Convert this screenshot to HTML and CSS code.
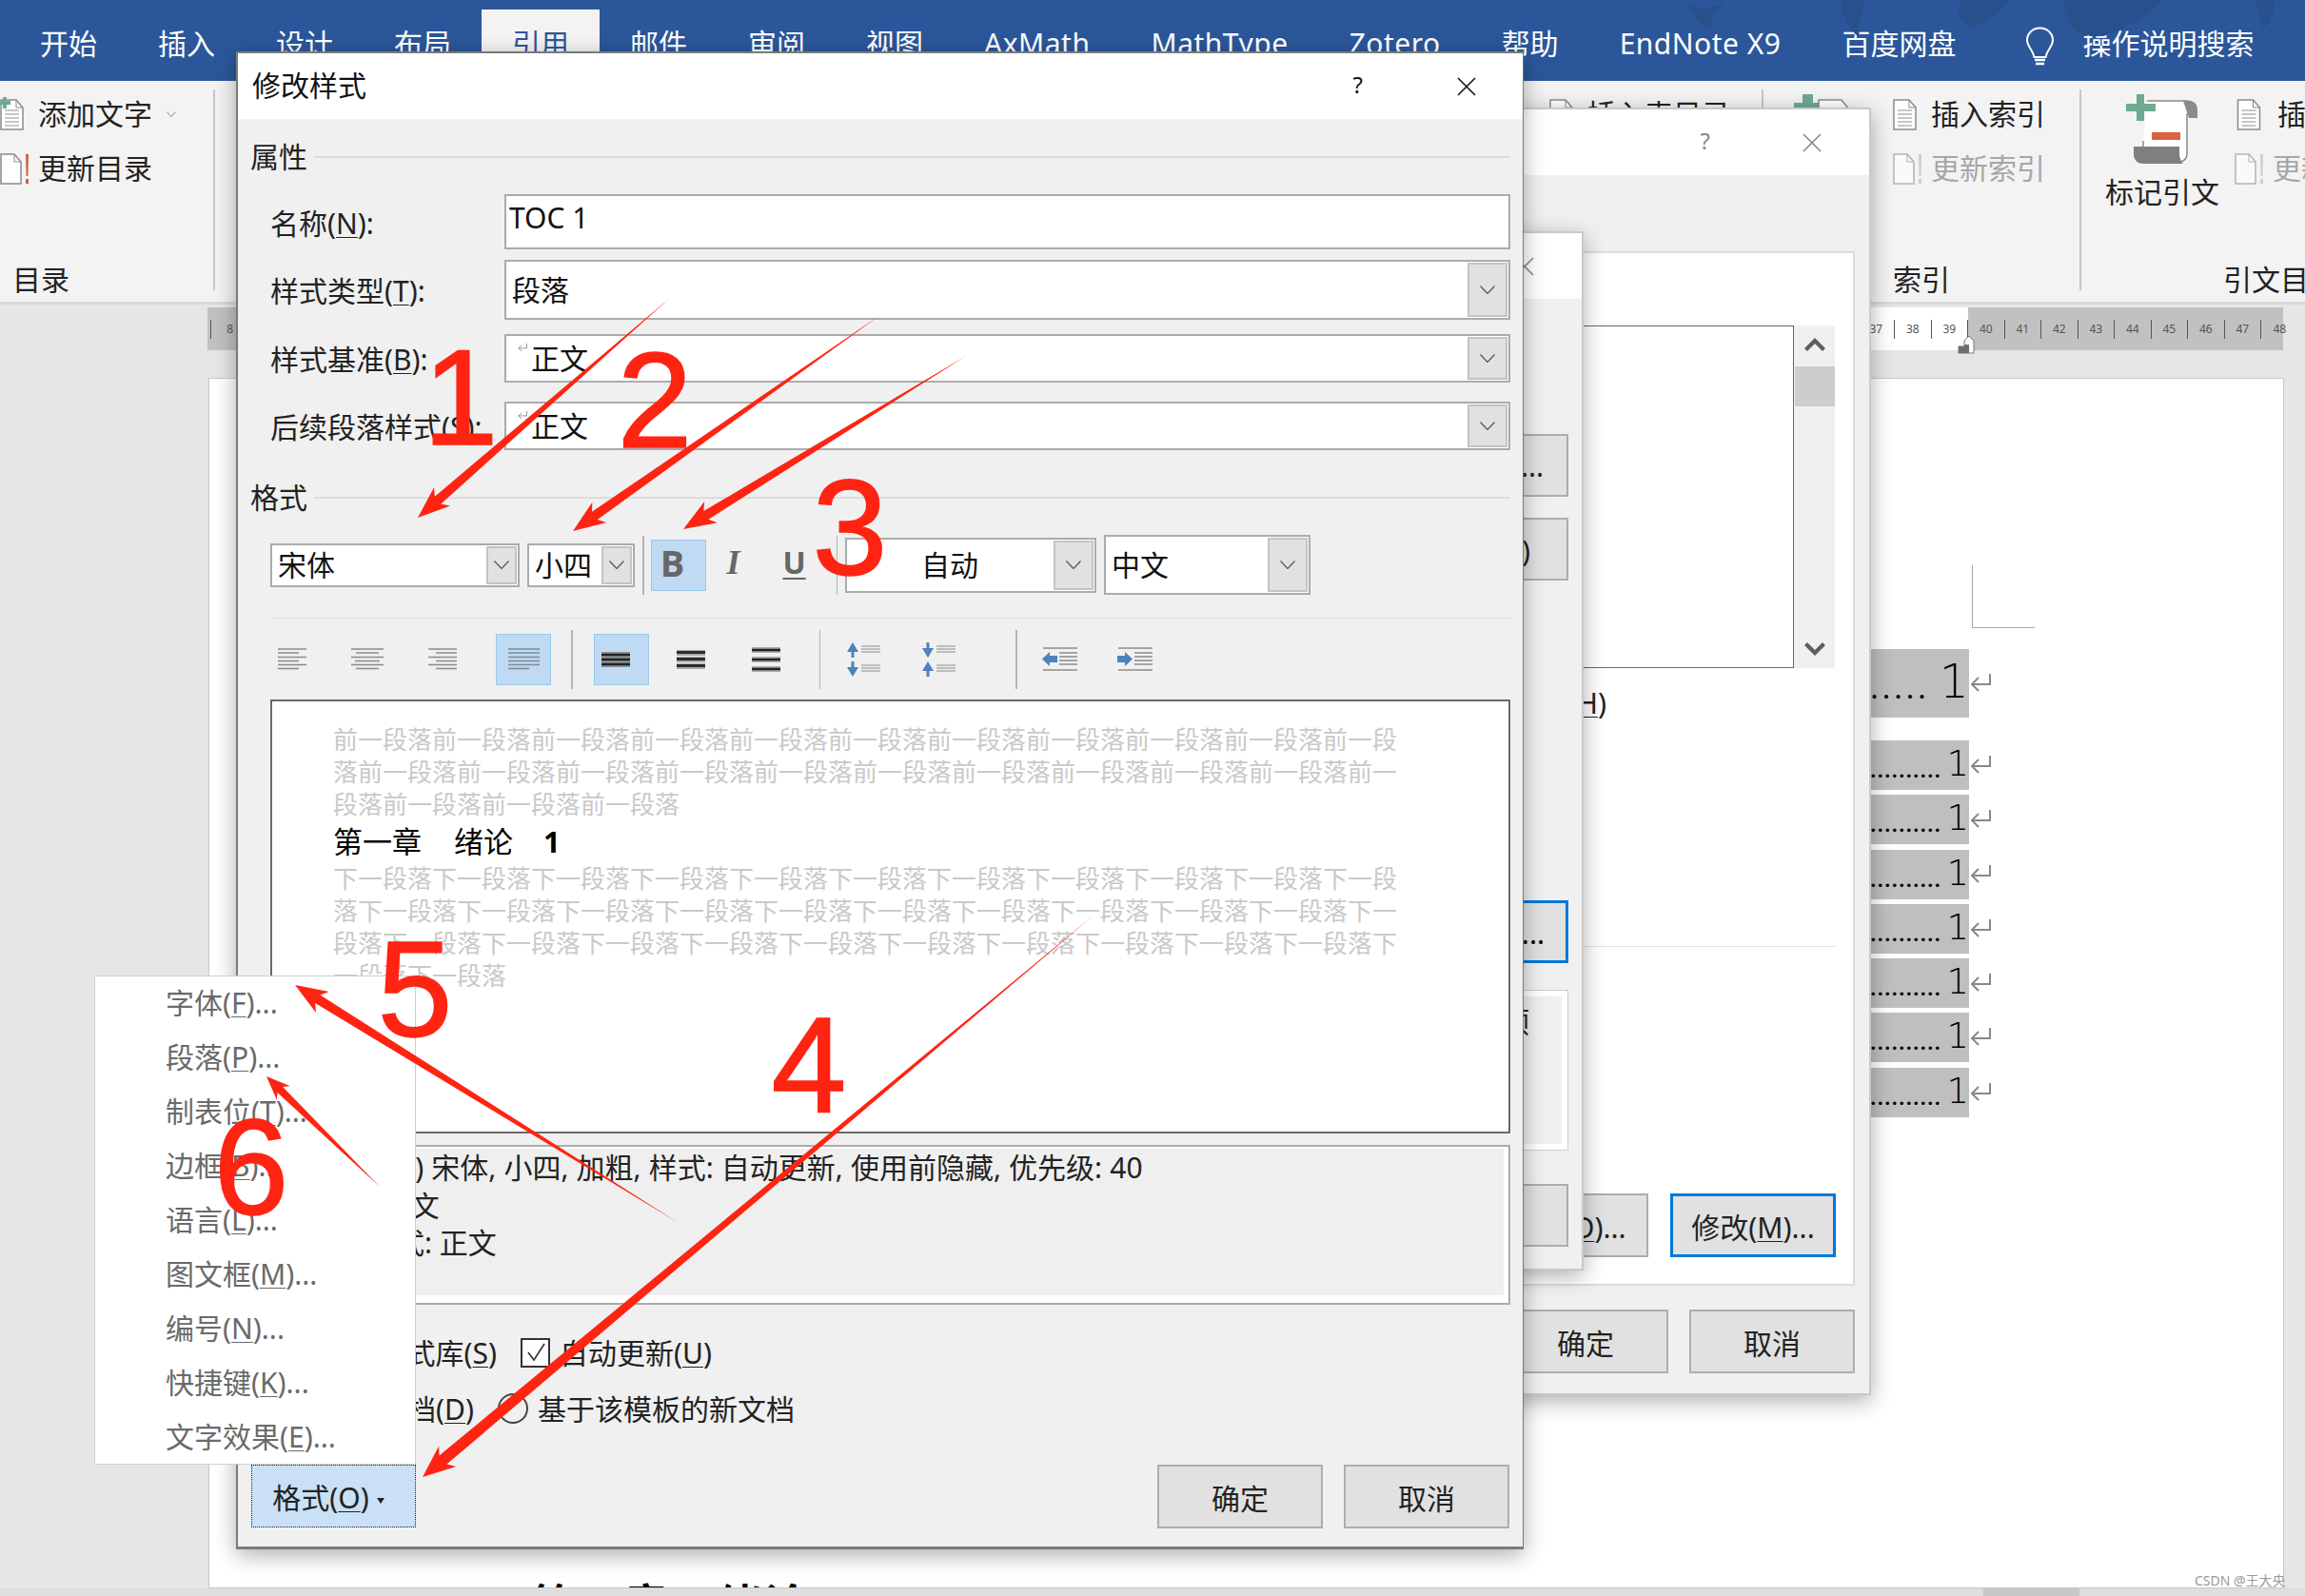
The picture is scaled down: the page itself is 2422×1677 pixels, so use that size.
FILE: index.html
```html
<!DOCTYPE html>
<html lang="zh-CN">

<head>
    <meta charset="UTF-8">
    <title>修改样式</title>
    <link rel="stylesheet" href="styles.css">
</head>

<body>
    <svg class="defs">
        <symbol id="chev" viewBox="0 0 16 9"><path d="M0.5 0.5L8 8.5L15.5 0.5" fill="none" stroke="#555" stroke-width="1.2"/></symbol>
        <symbol id="ret" viewBox="0 0 22 20"><path d="M21 1v11H2M9 5L2 12l7 7" fill="none" stroke="#888" stroke-width="2"/></symbol>
        <symbol id="close" viewBox="0 0 20 20"><path d="M1 1L19 19M19 1L1 19" fill="none" stroke="currentColor" stroke-width="1.6"/></symbol>
        <symbol id="doc" viewBox="0 0 25 33"><path d="M1 1h16l7 8v23H1z" fill="#fff" stroke="#8a8a8a" stroke-width="1.5"/><path d="M17 1v8h7" fill="none" stroke="#8a8a8a"/><path d="M5 12h15M5 16h15M5 20h15M5 24h15M5 28h15" stroke="#b5b5b5" stroke-width="1.5"/></symbol>
        <symbol id="docblank" viewBox="0 0 32 33"><path d="M1 1h14l7 8v23H1z" fill="#fff" stroke="#8a8a8a" stroke-width="1.5"/><path d="M15 1v8h7" fill="none" stroke="#8a8a8a"/><path d="M27 1h3l-.6 23h-1.8zM27 27h3v5h-3z" fill="currentColor"/></symbol>
    </svg>

    <div class="desk">
        <header class="titlebar">
            <svg class="swirl" width="650" height="60" viewBox="0 0 650 60">
                <path d="M0 0c8 10 30 12 44 0c-6 12-20 16-14 32c-16-4-24-20-30-32zM164 0h26c-4 14-8 26-6 40c-12-10-20-26-20-40zM290 0c-4 16-2 22 10 30c16-6 30-16 42-30zM400 0c-4 22 8 40 40 38c20-6 54-24 60-38zM600 0h20c0 12-4 24-12 30z" fill="#28508d"/>
            </svg>
            <div class="tab">开始</div>
            <div class="tab">插入</div>
            <div class="tab">设计</div>
            <div class="tab">布局</div>
            <div class="tab tab-active">引用</div>
            <div class="tab">邮件</div>
            <div class="tab">审阅</div>
            <div class="tab">视图</div>
            <div class="tab tab-latin">AxMath</div>
            <div class="tab tab-latin">MathType</div>
            <div class="tab tab-latin">Zotero</div>
            <div class="tab">帮助</div>
            <div class="tab tab-latin">EndNote X9</div>
            <div class="tab">百度网盘</div>
            <svg class="bulb" width="31" height="42" viewBox="0 0 31 42">
                <path d="M15.5 1.5C7 1.5 2 8 2 14c0 7 6 10 7.5 18h12C23 24 29 21 29 14c0-6-5-12.500-13.500-12.500z" fill="none" stroke="#fff" stroke-width="2"/>
                <path d="M10 35h11M11 39h9" stroke="#fff" stroke-width="2.500"/>
            </svg>
            <div class="tab-search">操作说明搜索</div>
        </header>

        <section class="ribbon">
            <div class="rgroup rg-toc">
                <div class="cmd">
                    <svg class="ico" width="25" height="33"><use href="#doc"/></svg>
                    <span>添加文字</span><svg class="chev chev-small"><use href="#chev"/></svg>
                    <svg class="plus" width="14" height="14" viewBox="0 0 14 14"><path d="M3 0h4v4h4v4H7v4H3V8H0V4h3z" fill="#6fa98f"/></svg>
                </div>
                <div class="cmd">
                    <svg class="ico ico-warn" width="32" height="33"><use href="#docblank"/></svg>
                    <span>更新目录</span>
                </div>
                <div class="rlabel rl-toc">目录</div>
            </div>
            <div class="rsep"></div>
            <div class="rgroup rg-notes">
                <div class="cmd">
                    <svg class="ico" width="25" height="33"><use href="#doc"/></svg>
                    <span>插入表目录</span>
                </div>
            </div>
            <div class="rsep"></div>
            <div class="rgroup rg-index">
                <div class="rcols">
                    <svg class="green-top" width="60" height="30" viewBox="0 0 60 30">
                        <path d="M9 0h11v9h9v6H20v15H9V15H0V9h9z" fill="#6fa98f"/>
                        <path d="M26 6h24l8 10v14H26z" fill="#fff" stroke="#8a8a8a" stroke-width="1.5"/>
                    </svg>
                    <div class="rcol">
                        <div class="cmd">
                            <svg class="ico" width="25" height="33"><use href="#doc"/></svg>
                            <span>插入索引</span>
                        </div>
                        <div class="cmd cmd-off">
                            <svg class="ico ico-off" width="32" height="33"><use href="#docblank"/></svg>
                            <span>更新索引</span>
                        </div>
                    </div>
                </div>
                <div class="rlabel rl-center">索引</div>
            </div>
            <div class="rsep"></div>
            <div class="rgroup rg-cite">
                <div class="rcols">
                    <div class="bigcmd">
                        <svg width="76" height="74" viewBox="0 0 76 74">
                            <path d="M22 8h42c6 0 8 4 8 10v4H64v42c0 5-4 8-8 8H18V50" fill="#fff" stroke="#8a8a8a" stroke-width="1.500"/>
                            <path d="M60 8h6c6 0 9 4 9 10v8H66z" fill="#8a8a8a"/>
                            <path d="M8 56h48v6c0 6 2 10 4 12H18C12 74 8 70 8 64z" fill="#7f7f7f"/>
                            <path d="M27 41h30v8H27z" fill="#dc6141"/>
                            <path d="M11 1h8v10h12v8H19v10h-8V19H0v-8h11z" fill="#6fa98f"/>
                        </svg>
                        <span>标记引文</span>
                    </div>
                    <div class="rcol rcol-cite">
                        <div class="cmd">
                            <svg class="ico" width="30" height="33"><use href="#doc"/></svg>
                            <span>插入引文目录</span>
                        </div>
                        <div class="cmd cmd-off">
                            <svg class="ico ico-off" width="32" height="33"><use href="#docblank"/></svg>
                            <span>更新表格</span>
                        </div>
                    </div>
                </div>
                <div class="rlabel rl-cite">引文目录</div>
            </div>
        </section>

        <div class="ruler">
            <div class="ruler-off ruler-stub"><span class="rcell rcell-left">8</span></div>
            <div class="ruler-on">
                <span class="rcell">37</span><span class="rcell">38</span><span class="rcell">39</span>
            </div>
            <div class="ruler-off ruler-end">
                <svg class="indent-mark" width="24" height="20" viewBox="0 0 24 20">
                    <path d="M1 19V12h6V6l5-5l5 5v13z" fill="#fff" stroke="#777"/>
                    <path d="M1 12h6v7H1zM7 10h5v9H7z" fill="#6e6e6e"/>
                </svg>
                <span class="rcell">40</span><span class="rcell">41</span><span class="rcell">42</span>
                <span class="rcell">43</span><span class="rcell">44</span><span class="rcell">45</span>
                <span class="rcell">46</span><span class="rcell">47</span><span class="rcell rcell-last">48</span>
            </div>
        </div>

        <main class="page">
            <div class="corner"></div>
            <div class="toc">
                <div class="toc-row toc-first">
                    <div class="toc-fill"><span class="dots">...................</span><span>1</span></div>
                    <svg class="ret" width="22" height="20"><use href="#ret"/></svg>
                </div>
                <div class="toc-row">
                    <div class="toc-fill"><span class="dots">....................................</span><span>1</span></div>
                    <svg class="ret" width="22" height="20"><use href="#ret"/></svg>
                </div>
                <div class="toc-row">
                    <div class="toc-fill"><span class="dots">....................................</span><span>1</span></div>
                    <svg class="ret" width="22" height="20"><use href="#ret"/></svg>
                </div>
                <div class="toc-row">
                    <div class="toc-fill"><span class="dots">....................................</span><span>1</span></div>
                    <svg class="ret" width="22" height="20"><use href="#ret"/></svg>
                </div>
                <div class="toc-row">
                    <div class="toc-fill"><span class="dots">....................................</span><span>1</span></div>
                    <svg class="ret" width="22" height="20"><use href="#ret"/></svg>
                </div>
                <div class="toc-row">
                    <div class="toc-fill"><span class="dots">....................................</span><span>1</span></div>
                    <svg class="ret" width="22" height="20"><use href="#ret"/></svg>
                </div>
                <div class="toc-row">
                    <div class="toc-fill"><span class="dots">....................................</span><span>1</span></div>
                    <svg class="ret" width="22" height="20"><use href="#ret"/></svg>
                </div>
                <div class="toc-row">
                    <div class="toc-fill"><span class="dots">....................................</span><span>1</span></div>
                    <svg class="ret" width="22" height="20"><use href="#ret"/></svg>
                </div>
            </div>
            <h1 class="doc-heading">第一章　绪论</h1>
        </main>

        <div class="hscroll"><div class="hthumb"></div></div>

        <!-- 目录 dialog, behind everything -->
        <div class="dialog dlg-toc">
            <div class="dlg-title dlg-title-off">
                <span class="dlg-name"></span>
                <span class="dlg-help">?</span>
                <svg class="dlg-close" width="20" height="20"><use href="#close"/></svg>
            </div>
            <div class="toc-panel">
                <div class="toc-list">
                    <div class="listbox"></div>
                    <div class="vscroll">
                        <svg width="22" height="14" viewBox="0 0 22 14"><path d="M11 0L22 11l-3 3l-8-8l-8 8l-3-3z" fill="#5e5e5e"/></svg>
                        <div class="vthumb"></div>
                        <svg class="vdown" width="22" height="14" viewBox="0 0 22 14"><path d="M11 14L22 3l-3-3l-8 8l-8-8l-3 3z" fill="#5e5e5e"/></svg>
                    </div>
                </div>
                <div class="toc-note">显示级别(<u>H</u>)</div>
                <div class="toc-rule"></div>
                <div class="toc-btns">
                    <button class="btn">删除(<u>D</u>)...</button>
                    <button class="btn btn-focus">修改(<u>M</u>)...</button>
                </div>
            </div>
            <div class="dlg-foot dlg-foot-toc">
                <button class="btn">确定</button>
                <button class="btn">取消</button>
            </div>
        </div>

        <!-- 样式 dialog, between the two -->
        <div class="dialog dlg-style">
            <div class="dlg-title">
                <svg class="dlg-close" width="20" height="20"><use href="#close"/></svg>
            </div>
            <div class="style-body">
                <button class="btn style-btn style-first">...</button>
                <button class="btn style-btn style-mid">样式(<u>N</u>)</button>
                <button class="btn style-btn style-focus">修改(<u>O</u>)...</button>
                <div class="style-note"><div class="style-note-in">预</div></div>
                <button class="btn style-btn style-last"></button>
            </div>
        </div>

        <!-- 修改样式 -->
        <div class="dialog dlg-main">
            <div class="dlg-title">
                <span class="dlg-name">修改样式</span>
                <span class="dlg-help">?</span>
                <svg class="dlg-close" width="20" height="20"><use href="#close"/></svg>
            </div>
            <div class="dlg-body">
                <div class="sec sec-props"><span>属性</span><i></i></div>
                <div class="field f-name">
                    <label>名称(<u>N</u>):</label>
                    <div class="combo"><span class="val val-top">TOC 1</span></div>
                </div>
                <div class="field f-type">
                    <label>样式类型(<u>T</u>):</label>
                    <div class="combo"><span class="val">段落</span>
                        <span class="arrow"><svg class="chev"><use href="#chev"/></svg></span></div>
                </div>
                <div class="field f-base">
                    <label>样式基准(<u>B</u>):</label>
                    <div class="combo"><svg class="ret-small" width="10" height="10"><use href="#ret"/></svg><span class="val val-ret">正文</span>
                        <span class="arrow"><svg class="chev"><use href="#chev"/></svg></span></div>
                </div>
                <div class="field f-next">
                    <label>后续段落样式(<u>S</u>):</label>
                    <div class="combo"><svg class="ret-small" width="10" height="10"><use href="#ret"/></svg><span class="val val-ret">正文</span>
                        <span class="arrow"><svg class="chev"><use href="#chev"/></svg></span></div>
                </div>

                <div class="sec sec-format"><span>格式</span><i></i></div>
                <div class="tools tools-font">
                    <div class="combo c-font"><span class="val">宋体</span>
                        <span class="arrow"><svg class="chev"><use href="#chev"/></svg></span></div>
                    <div class="combo c-size"><span class="val">小四</span>
                        <span class="arrow"><svg class="chev"><use href="#chev"/></svg></span></div>
                    <div class="vsep vsep-a"></div>
                    <div class="tbtn tbtn-on t-bold">B</div>
                    <div class="tbtn t-italic">I</div>
                    <div class="tbtn t-under">U</div>
                    <div class="vsep vsep-b"></div>
                    <div class="combo c-color"><span class="val">自动</span>
                        <span class="arrow"><svg class="chev"><use href="#chev"/></svg></span></div>
                    <div class="combo c-lang"><span class="val">中文</span>
                        <span class="arrow"><svg class="chev"><use href="#chev"/></svg></span></div>
                </div>
                <div class="hrule"></div>
                <div class="tools tools-para">
                    <div class="tbtn"><svg width="30" height="23" viewBox="0 0 30 23"><path d="M0 1h30M0 5h22M0 9.500h30M0 13.500h22M0 17.500h30M0 21.500h22" stroke="#8a8a8a" stroke-width="1.500"/></svg></div>
                    <div class="tbtn t-gap"><svg width="34" height="23" viewBox="0 0 34 23"><path d="M0 1h34M5 5h24M0 9.500h34M4 13.500h26M0 17.500h34M5 21.500h24" stroke="#8a8a8a" stroke-width="1.500"/></svg></div>
                    <div class="tbtn t-gap"><svg width="30" height="23" viewBox="0 0 30 23"><path d="M0 1h30M8 5h22M0 9.500h30M8 13.500h22M0 17.500h30M8 21.500h22" stroke="#8a8a8a" stroke-width="1.500"/></svg></div>
                    <div class="tbtn tbtn-on t-just"><svg width="33" height="23" viewBox="0 0 33 23"><path d="M0 1h33M0 5h33M0 9.500h33M0 13.500h33M0 17.500h33M0 21.500h22" stroke="#7c8a96" stroke-width="1.500"/></svg></div>
                    <div class="vsep vsep-c"></div>
                    <div class="tbtn tbtn-on t-single"><svg class="off-left" width="30" height="16" viewBox="0 0 30 16"><rect width="30" height="16" fill="#8a9299"/><path d="M0 3h30M0 8h30M0 13h30" stroke="#222" stroke-width="2.500"/></svg></div>
                    <div class="tbtn t-half"><svg width="30" height="20" viewBox="0 0 30 20"><path d="M0 3h30M0 10h30M0 17h30" stroke="#aaa" stroke-width="6"/><path d="M0 2.500h30M0 9.500h30M0 16.500h30" stroke="#2c2c2c" stroke-width="3"/></svg></div>
                    <div class="tbtn t-gap"><svg width="30" height="26" viewBox="0 0 30 26"><path d="M0 3h30M0 13h30M0 23h30" stroke="#aaa" stroke-width="6"/><path d="M0 3h30M0 13h30M0 23h30" stroke="#222" stroke-width="2.500"/></svg></div>
                    <div class="vsep vsep-d"></div>
                    <div class="tbtn t-up"><svg width="36" height="36" viewBox="0 0 36 36"><path d="M7 0l6 10H8.500v6h-3v-6H1zM7 36l6-10H8.500v-6h-3v6H1z" fill="#4f81bd"/><path d="M16 4h20M16 7h20M16 10h20M16 24h20M16 27h20M16 30h20" stroke="#8a8a8a"/></svg></div>
                    <div class="tbtn t-gap"><svg width="36" height="36" viewBox="0 0 36 36"><path d="M7 16l6-10H8.500V0h-3v6H1zM7 20l6 10H8.500v6h-3v-6H1z" fill="#4f81bd"/><path d="M16 4h20M16 7h20M16 10h20M16 24h20M16 27h20M16 30h20" stroke="#8a8a8a"/></svg></div>
                    <div class="vsep vsep-e"></div>
                    <div class="tbtn t-up"><svg width="37" height="25" viewBox="0 0 37 25"><path d="M1 1h36M1 24h36M18 6h19M18 10h19M18 14h19M18 18h19" stroke="#8a8a8a" stroke-width="1.300"/><path d="M0 12.500L8 5v4h8v7H8v4z" fill="#4f81bd"/></svg></div>
                    <div class="tbtn t-gap"><svg width="37" height="25" viewBox="0 0 37 25"><path d="M1 1h36M1 24h36M18 6h19M18 10h19M18 14h19M18 18h19" stroke="#8a8a8a" stroke-width="1.300"/><path d="M16 12.500L8 5v4H0v7h8v4z" fill="#4f81bd"/></svg></div>
                </div>

                <div class="preview">
                    <p>前一段落前一段落前一段落前一段落前一段落前一段落前一段落前一段落前一段落前一段落前一段</p>
                    <p>落前一段落前一段落前一段落前一段落前一段落前一段落前一段落前一段落前一段落前一段落前一</p>
                    <p>段落前一段落前一段落前一段落</p>
                    <p class="sample">第一章<span class="s1">绪论</span><span class="s2">1</span></p>
                    <p>下一段落下一段落下一段落下一段落下一段落下一段落下一段落下一段落下一段落下一段落下一段</p>
                    <p>落下一段落下一段落下一段落下一段落下一段落下一段落下一段落下一段落下一段落下一段落下一</p>
                    <p>段落下一段落下一段落下一段落下一段落下一段落下一段落下一段落下一段落下一段落下一段落下</p>
                    <p>一段落下一段落</p>
                </div>

                <div class="desc">
                    <div class="desc-in">
                        <div class="desc-first">字体: (默认) 宋体, 小四, 加粗, 样式: 自动更新, 使用前隐藏, 优先级: 40</div>
                        <div class="desc-sub">基于: 正文</div>
                        <div class="desc-sub">后续样式: 正文</div>
                    </div>
                </div>

                <div class="opt opt-a">
                    <span class="tick"></span><span class="opt-label opt-long">添加到样式库(<u>S</u>)</span>
                    <span class="tick tick-on"><svg width="26" height="26" viewBox="0 0 26 26"><path d="M5 13l6 8L22 4" fill="none" stroke="#333" stroke-width="1.600"/></svg></span>
                    <span class="opt-text">自动更新(<u>U</u>)</span>
                </div>
                <div class="opt opt-b">
                    <span class="radio radio-hidden"></span><span class="opt-label opt-short">仅限此文档(<u>D</u>)</span>
                    <span class="radio"></span>
                    <span class="opt-text opt-text-r">基于该模板的新文档</span>
                </div>

                <div class="dlg-foot">
                    <button class="btn btn-format">格式(<u>O</u>)<b class="caret"></b></button>
                    <span class="foot-gap"></span>
                    <button class="btn">确定</button>
                    <button class="btn">取消</button>
                </div>
            </div>
        </div>

        <ul class="menu">
            <li>字体(<u>F</u>)...</li>
            <li>段落(<u>P</u>)...</li>
            <li>制表位(<u>T</u>)...</li>
            <li>边框(<u>B</u>)...</li>
            <li>语言(<u>L</u>)...</li>
            <li>图文框(<u>M</u>)...</li>
            <li>编号(<u>N</u>)...</li>
            <li>快捷键(<u>K</u>)...</li>
            <li>文字效果(<u>E</u>)...</li>
        </ul>

        <div class="watermark">CSDN @王大央</div>

        <!-- red marks drawn over the screenshot -->
        <svg class="marks" width="2422" height="1677" viewBox="0 0 2422 1677">
            <g class="mark-shapes">
                <polygon points="704,313 463.400,529.400 473.100,531.500 439,544 456.100,511.900 456.800,521.800"/>
                <polygon points="925,331 627.800,546 637.300,549 602,558 622.300,527.800 622,537.800"/>
                <polygon points="1015,374 744.500,545.700 753.800,549.300 718,556 740.200,527.100 739.300,537.100"/>
                <polygon points="1150,961 469.400,1538.600 479.100,1540.900 444,1552 461.100,1519.500 461.600,1529.400"/>
                <polygon points="713,1285 331.200,1054 332,1064 310,1035 345.800,1041.900 336.400,1045.500"/>
                <polygon points="399,1247 291.500,1147.900 290.900,1155.700 280,1131 304.900,1141.300 297.100,1142.100"/>
            </g>
            <text x="484" y="467">1</text>
            <text x="688" y="470">2</text>
            <text x="893" y="604">3</text>
            <text x="850" y="1168">4</text>
            <text x="436" y="1089">5</text>
            <text x="264" y="1276">6</text>
        </svg>
    </div>
</body>

</html>
```

FILE: styles.css
```css
* {
    box-sizing: border-box;
}

html,
body {
    margin: 0;
    padding: 0;
}

body {
    font-family: "Noto Sans", "Noto Sans CJK SC", sans-serif;
    font-size: 30px;
    color: #222;
}

u {
    text-underline-offset: 3px;
    text-decoration-thickness: 1px;
}

.defs {
    position: absolute;
    width: 0;
    height: 0;
}

.desk {
    position: relative;
    width: 2422px;
    height: 1677px;
    overflow: hidden;
    background-color: #e6e6e6;
}

/* title bar and tabs */
.titlebar {
    position: relative;
    display: flex;
    height: 85px;
    padding-left: 10px;
    background-color: #2b579a;
}

.swirl {
    position: absolute;
    top: 0;
    left: 1770px;
}

.tab {
    height: 75px;
    margin-top: 10px;
    padding: 0 32px;
    line-height: 72px;
    color: #fff;
    white-space: nowrap;
}

.tab-latin {
    letter-spacing: 0.5px;
}

.tab-active {
    color: #2b579a;
    background-color: #f3f3f3;
}

.bulb {
    margin: 28px 0 0 40px;
    flex: none;
}

.tab-search {
    margin: 10px 0 0 30px;
    line-height: 72px;
    color: #fff;
    white-space: nowrap;
}

/* ribbon */
.ribbon {
    display: flex;
    height: 235px;
    border-bottom: 3px solid #d9d9d9;
    background-color: #f3f3f3;
    overflow: hidden;
}

.rsep {
    flex: none;
    width: 2px;
    height: 211px;
    margin-top: 9px;
    background-color: #c6c6c6;
}

.rgroup {
    flex: none;
    display: flex;
    flex-direction: column;
    height: 232px;
    padding-top: 13px;
}

.rg-toc {
    width: 224px;
}

.rg-notes {
    width: 1625px;
    padding-left: 1402px;
}

.rg-index {
    width: 332px;
    padding-left: 32px;
}

.rg-cite {
    width: 240px;
    padding-left: 24px;
}

.cmd {
    position: relative;
    display: flex;
    align-items: center;
    height: 44px;
    margin-bottom: 13px;
    white-space: nowrap;
}

.cmd span {
    padding-bottom: 4px;
}

.cmd-off {
    color: #a6a6a6;
}

.ico {
    flex: none;
    margin-right: 15px;
}

.ico-warn {
    margin-right: 8px;
    color: #d4603a;
}

.ico-off {
    margin-right: 8px;
    color: #b5b5b5;
    opacity: 0.6;
}

.plus {
    position: absolute;
    top: 4px;
    left: 0;
}

.chev {
    flex: none;
    width: 16px;
    height: 9px;
}

.chev-small {
    width: 10px;
    height: 6px;
    margin-left: 15px;
}

.rcols {
    display: flex;
}

.green-top {
    flex: none;
    margin-top: 1px;
}

.rcol {
    margin-left: 44px;
}

.rcol-cite {
    margin-left: 15px;
}

.bigcmd {
    flex: none;
    display: flex;
    flex-direction: column;
    align-items: center;
    width: 122px;
}

.bigcmd span {
    margin-top: 6px;
    white-space: nowrap;
}

.rlabel {
    margin-top: auto;
    height: 40px;
    line-height: 40px;
    margin-bottom: 3px;
    white-space: nowrap;
}

.rl-toc {
    padding-left: 13px;
}

.rl-center {
    margin-left: -32px;
    text-align: center;
}

.rl-cite {
    margin-left: 125px;
}

/* ruler */
.ruler {
    display: flex;
    width: 2181px;
    height: 45px;
    margin: 3px 0 0 218px;
    font-size: 12px;
    color: #555;
}

.ruler-off {
    position: relative;
    background-color: #c1c1c1;
}

.ruler-stub {
    width: 60px;
}

.ruler-on {
    display: flex;
    justify-content: flex-end;
    width: 1790px;
    background-color: #fff;
}

.ruler-end {
    display: flex;
    width: 331px;
}

.rcell {
    flex: none;
    width: 38.500px;
    height: 20px;
    margin-top: 13px;
    line-height: 20px;
    text-align: center;
    border-right: 1px solid #555;
}

.rcell-left {
    display: block;
    width: 24px;
    border-right: 0;
    border-left: 1px solid #555;
    margin-left: 3px;
    text-align: right;
}

.rcell-last {
    border-right: 0;
}

.indent-mark {
    position: absolute;
    top: 29px;
    left: -11px;
}

/* document page */
.page {
    width: 2181px;
    height: 1272px;
    margin: 29px 0 0 219px;
    border: 1px solid #c8c8c8;
    background-color: #fff;
    overflow: hidden;
}

.corner {
    width: 66px;
    height: 66px;
    margin: 196px 0 0 1852px;
    border-left: 1px solid #a6a6a6;
    border-bottom: 1px solid #a6a6a6;
}

.toc {
    display: flex;
    flex-direction: column;
    gap: 5.300px;
    margin: 22px 0 0 1549px;
}

.toc-row {
    display: flex;
    align-items: center;
    height: 52px;
}

.toc-first {
    height: 72px;
    margin-bottom: 18.700px;
}

.toc-fill {
    display: flex;
    justify-content: flex-end;
    flex: none;
    width: 300px;
    height: 100%;
    line-height: 50px;
    background-color: #bfbfbf;
    font-family: "DejaVu Sans", sans-serif;
    font-size: 37px;
    font-weight: 200;
    color: #000;
    white-space: nowrap;
    overflow: hidden;
}

.toc-first .toc-fill {
    line-height: 70px;
    font-size: 49px;
}

.dots {
    flex: none;
    margin-right: 6px;
    font-family: "Liberation Serif", serif;
    font-size: 30px;
    letter-spacing: 0;
    line-height: 58px;
}

.toc-first .dots {
    margin-right: 10px;
    font-size: 34px;
    letter-spacing: 4px;
    line-height: 82px;
}

.ret {
    flex: none;
    margin: 0 0 2px 1px;
}

.doc-heading {
    margin: 481px 0 0 338px;
    font-size: 46px;
    line-height: 60px;
    letter-spacing: 3px;
    color: #000;
}

.hscroll {
    height: 8px;
    background-color: #dedede;
}

.hthumb {
    width: 101px;
    height: 8px;
    margin-left: 2084px;
    background-color: #c8c8c8;
}

/* dialog windows */
.dialog {
    position: absolute;
    display: flex;
    flex-direction: column;
    border: 2px solid #c9c9c9;
    background-color: #f0f0f0;
    box-shadow: 0 6px 22px rgba(0, 0, 0, 0.32);
}

.dlg-main {
    left: 248px;
    top: 54px;
    width: 1353px;
    height: 1574px;
    border-color: #7a7a7a;
    border-right-width: 1px;
    border-bottom-width: 3px;
}

.dlg-toc {
    left: 1500px;
    top: 113px;
    width: 466px;
    height: 1353px;
}

.dlg-style {
    left: 1200px;
    top: 243px;
    width: 464px;
    height: 1092px;
}

.dlg-title {
    flex: none;
    display: flex;
    align-items: center;
    height: 69px;
    background-color: #fff;
    color: #111;
}

.dlg-title-off {
    color: #888;
}

.dlg-name {
    padding: 0 0 5px 15px;
    flex: 1;
}

.dlg-help {
    font-size: 24px;
    padding-bottom: 4px;
    margin-right: 99px;
}

.dlg-close {
    flex: none;
    margin-right: 49px;
}

.dlg-style .dlg-title {
    justify-content: flex-end;
}

.dlg-style .dlg-close {
    margin-right: 50px;
    color: #888;
}

.dlg-toc .dlg-help {
    margin-right: 97px;
}

.dlg-toc .dlg-close {
    margin-right: 50px;
}

.btn {
    flex: none;
    width: 174px;
    height: 67px;
    padding: 0;
    border: 2px solid #adadad;
    background-color: #e1e1e1;
    font-family: inherit;
    font-size: 30px;
    color: #222;
    white-space: nowrap;
}

/* 目录 dialog content */
.toc-panel {
    display: flex;
    flex-direction: column;
    height: 1087px;
    margin: 80px 15px 0 0;
    border: 2px solid #dcdcdc;
    border-left: 0;
    background-color: #fff;
}

.toc-list {
    display: flex;
    height: 360px;
    margin: 76px 19px 0 0;
}

.listbox {
    flex: 1;
    border: 1px solid #666;
}

.vscroll {
    display: flex;
    flex-direction: column;
    align-items: center;
    width: 43px;
    padding-top: 13px;
    background-color: #f0f0f0;
}

.vthumb {
    width: 42px;
    height: 42px;
    margin-top: 16px;
    background-color: #cdcdcd;
}

.vdown {
    margin-top: auto;
    margin-bottom: 13px;
}

.toc-note {
    width: 186px;
    margin-top: 17px;
    text-align: right;
    white-space: nowrap;
    direction: rtl;
    unicode-bidi: plaintext;
    line-height: 40px;
}

.toc-rule {
    height: 1px;
    margin: 235px 19px 0 0;
    background-color: #e2e2e2;
}

.toc-btns {
    display: flex;
    justify-content: flex-end;
    gap: 23px;
    margin: 259px 18px 0 0;
}

.toc-btns .btn:first-child {
    width: 171px;
}

.btn-focus {
    border: 3px solid #0078d7;
}

/* 样式 dialog content */
.style-body {
    display: flex;
    flex-direction: column;
    align-items: flex-end;
    padding: 142px 14px 0 0;
}

.style-btn {
    width: 300px;
    height: 66px;
    padding: 0 38px 0 0;
    text-align: right;
}

.style-first {
    padding-right: 24px;
}

.style-mid {
    margin-top: 22px;
}

.style-focus {
    margin-top: 336px;
    padding-right: 22px;
    border: 3px solid #0078d7;
    color: #000;
}

.style-note {
    width: 300px;
    height: 169px;
    margin-top: 28px;
    padding: 6px;
    border: 1px solid #ccc;
    background-color: #fff;
}

.style-note-in {
    height: 100%;
    padding: 3px 34px 0 0;
    text-align: right;
    background-color: #f0f0f0;
}

.style-last {
    margin-top: 35px;
}

/* 修改样式 content */
.dlg-body {
    flex: 1;
    display: flex;
    flex-direction: column;
    padding: 0 13px 0 14px;
}

.sec {
    display: flex;
    align-items: center;
    height: 40px;
    flex: none;
    margin-left: -1px;
}

.sec span {
    padding-bottom: 5px;
}

.sec i {
    flex: 1;
    height: 2px;
    margin-left: 7px;
    background-color: #dcdcdc;
}

.sec-props {
    margin-top: 20px;
}

.sec-format {
    margin-top: 33px;
}

.field {
    display: grid;
    grid-template-columns: 246px 1fr;
    align-items: center;
    flex: none;
    padding-left: 20px;
}

.field label {
    padding-bottom: 1px;
    white-space: nowrap;
}

.f-name {
    height: 58px;
    margin-top: 19px;
}

.f-type {
    height: 63px;
    margin-top: 11px;
}

.f-base {
    height: 48px;
    margin-top: 15px;
}

.f-next {
    height: 48px;
    margin-top: 23px;
}

.combo {
    position: relative;
    display: flex;
    align-items: center;
    height: 100%;
    border: 2px solid #ababab;
    background-color: #fff;
    color: #111;
}

.val {
    flex: 1;
    padding: 0 0 3px 6px;
    white-space: nowrap;
}

.val-top {
    align-self: flex-start;
    padding: 2px 0 0 3px;
}

.val-ret {
    padding-left: 26px;
}

.ret-small {
    position: absolute;
    top: 7px;
    left: 12px;
}

.arrow {
    flex: none;
    display: flex;
    align-items: center;
    justify-content: center;
    align-self: stretch;
    width: 42px;
    margin: 1px;
    border: 2px solid #c4c4c4;
    background-color: #e1e1e1;
}

.tools {
    display: flex;
    align-items: center;
    flex: none;
    height: 63px;
}

.tools-font {
    margin: 19px 0 0 20px;
}

.c-font {
    width: 262px;
    height: 46px;
}

.c-size {
    width: 113px;
    height: 46px;
    margin-left: 8px;
}

.c-font .arrow,
.c-size .arrow {
    width: 32px;
}

.c-color {
    width: 264px;
    height: 58px;
    margin-left: 8px;
}

.c-color .val {
    padding-left: 78px;
}

.c-lang {
    width: 217px;
    height: 63px;
    margin-left: 8px;
}

.c-lang .arrow {
    width: 42px;
}

.vsep {
    flex: none;
    width: 1.500px;
    height: 62px;
    background-color: #b5b5b5;
}

.vsep-a {
    margin-left: 8px;
}

.vsep-b {
    margin-left: 15px;
}

.vsep-c {
    margin-left: 21px;
}

.vsep-d {
    margin-left: 27px;
}

.vsep-e {
    margin-left: 52px;
}

.tbtn {
    flex: none;
    display: flex;
    align-items: center;
    justify-content: center;
    width: 58px;
    height: 54px;
    border: 1.500px solid transparent;
    color: #666;
    font-weight: 700;
}

.tbtn-on {
    background-color: #bfdaf2;
    border-color: #99c9ef;
}

.t-bold {
    margin-left: 7px;
    padding: 0 12px 5px 0;
    font-size: 38px;
    font-family: "Open Sans", sans-serif;
}

.t-italic {
    font-size: 36px;
    font-style: italic;
    font-family: "Liberation Serif", serif;
    padding-bottom: 5px;
}

.t-under {
    margin-left: 6px;
    font-size: 32px;
    text-decoration: underline;
    text-decoration-thickness: 2px;
    text-underline-offset: 4px;
    font-family: "Open Sans", sans-serif;
    padding-bottom: 7px;
}

.hrule {
    flex: none;
    height: 1px;
    margin: 24px 0 0 20px;
    background-color: #dedede;
}

.tools-para {
    margin: 11px 0 0 14px;
}

.t-gap {
    margin-left: 21px;
}

.t-just {
    margin-left: 27px;
}

.t-single {
    margin-left: 22px;
}

.off-left {
    margin-right: 12px;
}

.t-half {
    margin-left: 15px;
}

.t-up {
    margin-left: 16px;
}

.preview {
    flex: none;
    height: 456px;
    margin: 11px 0 0 20px;
    padding: 23px 0 0 64px;
    border: 2px solid #696969;
    background-color: #fff;
    font-size: 26px;
    line-height: 34px;
    color: #c9c9c9;
    white-space: nowrap;
    overflow: hidden;
}

.preview p {
    margin: 0;
}

.preview .sample {
    height: 44px;
    font-size: 31px;
    line-height: 44px;
    color: #000;
}

.s1 {
    margin-left: 34px;
}

.s2 {
    margin-left: 32px;
    font-weight: 700;
}

.desc {
    flex: none;
    height: 168px;
    margin: 12px 0 0 20px;
    padding: 5px;
    border: 2px solid #ababab;
    background-color: #fff;
}

.desc-in {
    height: 100%;
    line-height: 39.500px;
    color: #222;
    background-color: #efefef;
    white-space: nowrap;
}

.desc-first {
    margin-top: -3px;
    word-spacing: 0.300px;
}

.desc-sub {
    padding-left: 35px;
}

.opt {
    display: flex;
    align-items: center;
    flex: none;
    height: 36px;
}

.opt-a {
    margin-top: 32px;
}

.opt-b {
    margin-top: 23px;
}

.opt-label,
.opt-text {
    padding-bottom: 2px;
}

.tick {
    flex: none;
    width: 31px;
    height: 31px;
    border: 2px solid #333;
    background-color: #fff;
}

.tick-on {
    margin-left: 25px;
    display: flex;
    align-items: center;
    justify-content: center;
}

.opt-label {
    flex: none;
    margin-left: 7px;
    white-space: nowrap;
    text-align: right;
}

.opt-long {
    width: 220px;
}

.opt-short {
    width: 190px;
}

.opt-text {
    margin-left: 10px;
    white-space: nowrap;
}

.opt-text-r {
    margin-left: 10px;
}

.radio {
    flex: none;
    width: 32px;
    height: 32px;
    margin-left: 25px;
    border: 2px solid #444;
    border-radius: 50%;
    background-color: #f0f0f0;
}

.radio-hidden {
    margin-left: 5px;
}

.dlg-foot {
    display: flex;
    gap: 22px;
    flex: none;
    margin-top: auto;
    margin-bottom: 19px;
    margin-right: 1px;
}

.dlg-toc .dlg-foot {
    justify-content: flex-end;
    margin-right: 15px;
    margin-bottom: 21px;
}

.foot-gap {
    flex: 1;
}

.btn-format {
    width: 173px;
    height: 66px;
    padding-right: 11px;
    border: 1px dotted #222;
    background-color: #c9e0f7;
    color: #222;
}

.caret {
    display: inline-block;
    margin-left: 8px;
    vertical-align: middle;
    border-top: 6px solid #222;
    border-left: 4px solid transparent;
    border-right: 4px solid transparent;
}

/* format drop-down */
.menu {
    position: absolute;
    left: 99px;
    top: 1025px;
    width: 338px;
    height: 514px;
    margin: 0;
    padding: 2px 0 0 74px;
    list-style: none;
    border: 1px solid #cfcfcf;
    background-color: #fff;
    color: #6a6a6a;
}

.menu li {
    height: 57px;
    line-height: 52px;
    white-space: nowrap;
}

.watermark {
    position: absolute;
    left: 2306px;
    top: 1651px;
    font-size: 14px;
    line-height: 20px;
    color: #9a9a9a;
    white-space: nowrap;
}

.marks {
    position: absolute;
    top: 0;
    left: 0;
}

.mark-shapes {
    fill: #ff2412;
}

.marks text {
    font-family: "Liberation Sans", sans-serif;
    font-size: 142px;
    text-anchor: middle;
    fill: #ff2412;
    stroke: #ff2412;
    stroke-width: 1.500px;
}
```
